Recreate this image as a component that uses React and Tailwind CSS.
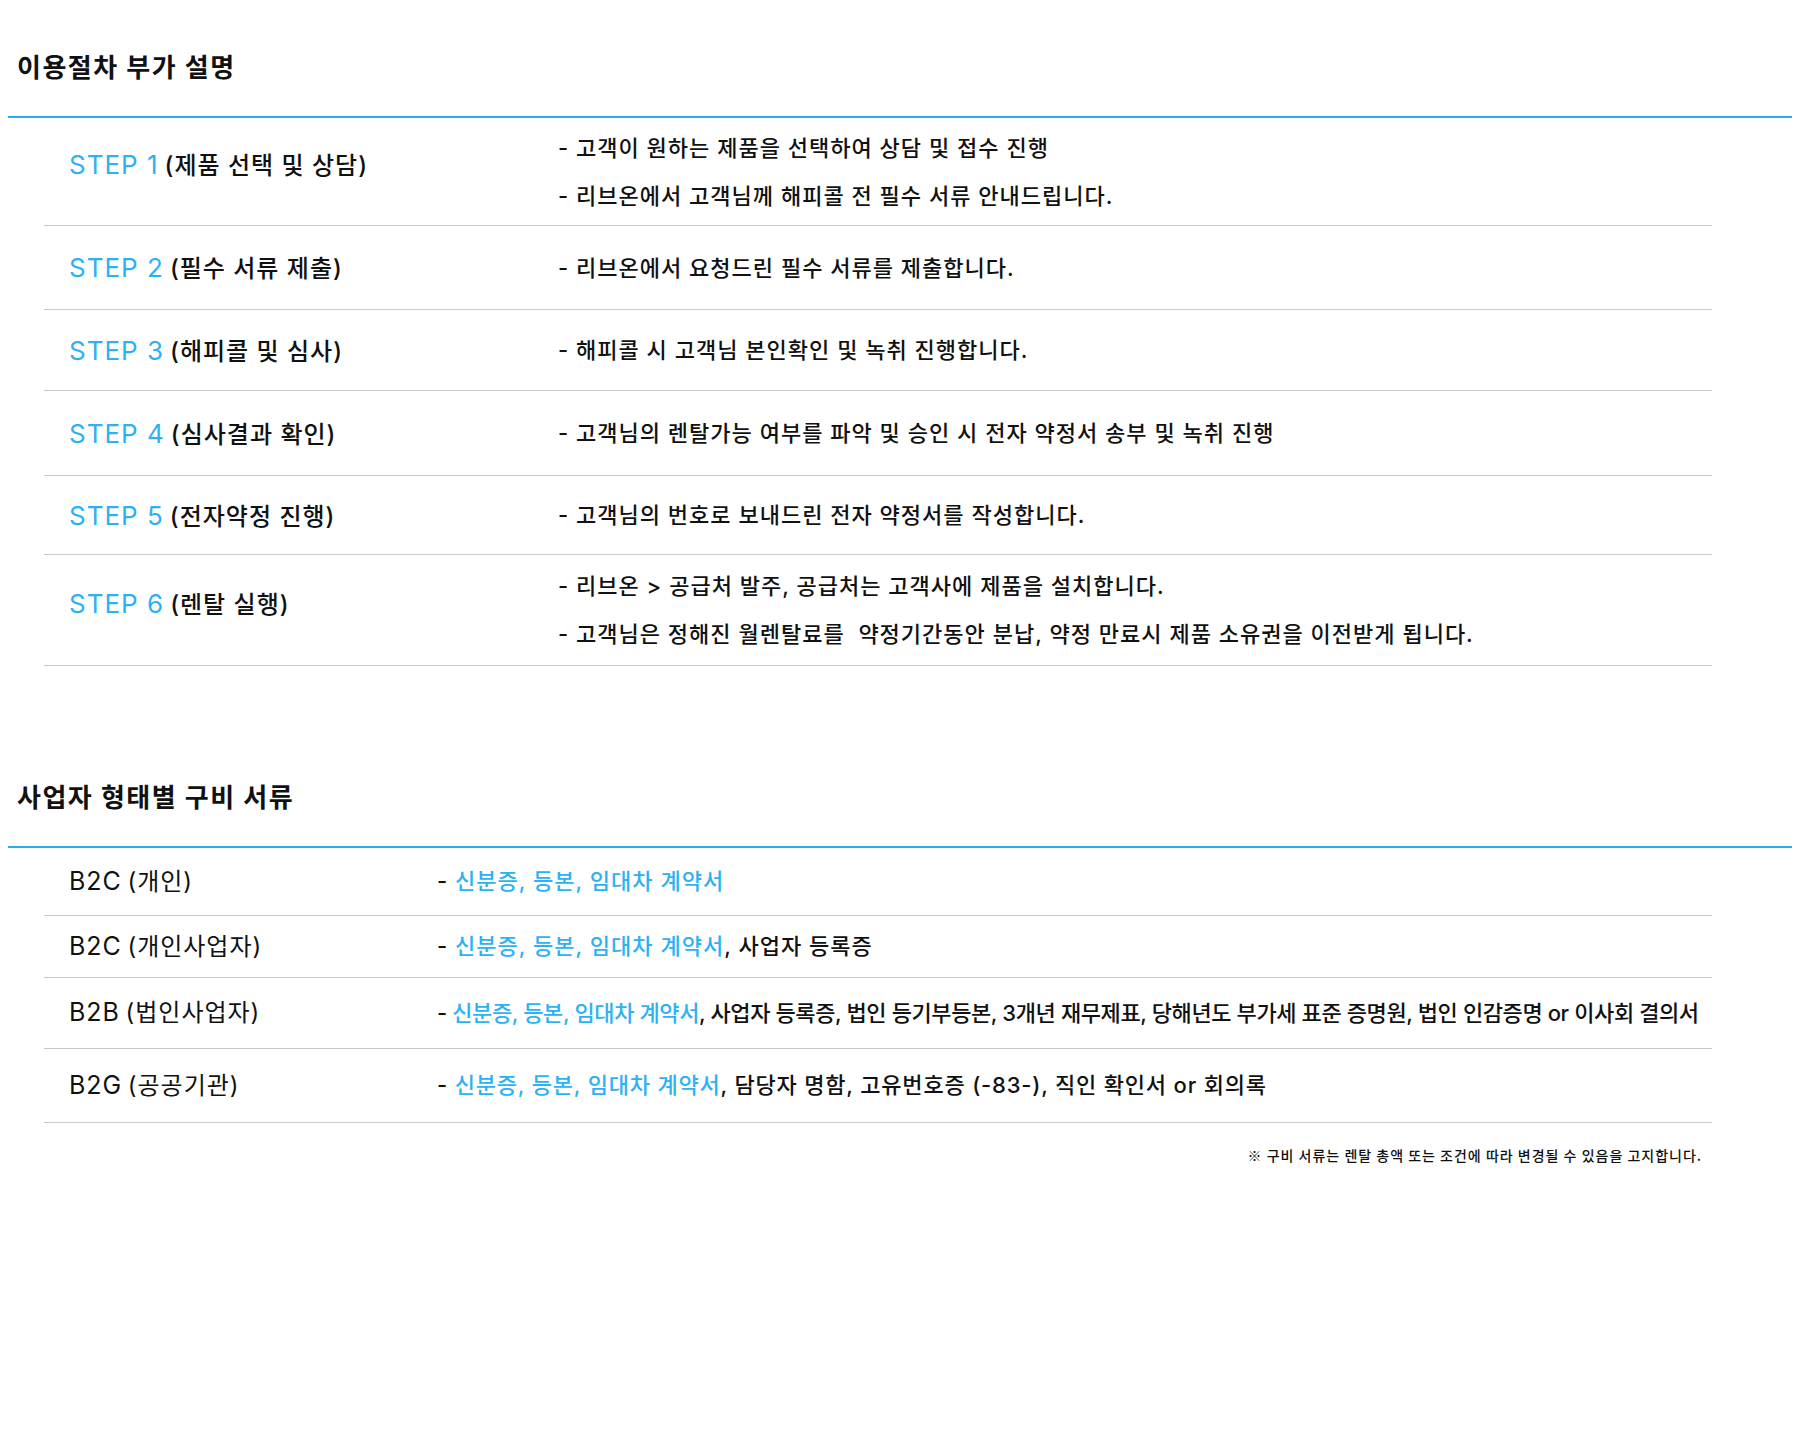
import React from "react";

const FONT = "font-['Inter','Noto_Sans_CJK_KR',sans-serif]";

const steps = [
  {
    no: 1,
    title: "(제품 선택 및 상담)",
    lines: [
      "- 고객이 원하는 제품을 선택하여 상담 및 접수 진행",
      "- 리브온에서 고객님께 해피콜 전 필수 서류 안내드립니다.",
    ],
    h: "h-[108px]",
  },
  {
    no: 2,
    title: "(필수 서류 제출)",
    lines: ["- 리브온에서 요청드린 필수 서류를 제출합니다."],
    h: "h-[84px]",
  },
  {
    no: 3,
    title: "(해피콜 및 심사)",
    lines: ["- 해피콜 시 고객님 본인확인 및 녹취 진행합니다."],
    h: "h-[81px]",
  },
  {
    no: 4,
    title: "(심사결과 확인)",
    lines: ["- 고객님의 렌탈가능 여부를 파악 및 승인 시 전자 약정서 송부 및 녹취 진행"],
    h: "h-[85px]",
  },
  {
    no: 5,
    title: "(전자약정 진행)",
    lines: ["- 고객님의 번호로 보내드린 전자 약정서를 작성합니다."],
    h: "h-[79px]",
  },
  {
    no: 6,
    title: "(렌탈 실행)",
    lines: [
      "- 리브온 > 공급처 발주, 공급처는 고객사에 제품을 설치합니다.",
      "- 고객님은 정해진 월렌탈료를  약정기간동안 분납, 약정 만료시 제품 소유권을 이전받게 됩니다.",
    ],
    h: "h-[111px]",
  },
];

const docs = [
  { type: "B2C", who: "(개인)", rest: "", h: "h-[68px]", track: "tracking-[1px]" },
  { type: "B2C", who: "(개인사업자)", rest: ", 사업자 등록증", h: "h-[62px]", track: "tracking-[1px]" },
  {
    type: "B2B",
    who: "(법인사업자)",
    rest: ", 사업자 등록증, 법인 등기부등본, 3개년 재무제표, 당해년도 부가세 표준 증명원, 법인 인감증명 or 이사회 결의서",
    h: "h-[71px]",
    track: "tracking-[-0.4px]",
  },
  {
    type: "B2G",
    who: "(공공기관)",
    rest: ", 담당자 명함, 고유번호증 (-83-), 직인 확인서 or 회의록",
    h: "h-[74px]",
    track: "tracking-[0.8px]",
  },
];

function SectionTitle({ children }) {
  return (
    <h2 className="pl-[9px] text-[26px] leading-[36px] tracking-[1.5px] font-bold text-[#111]">
      {children}
    </h2>
  );
}

function StepRow({ step }) {
  const twoLines = step.lines.length > 1;
  return (
    <li className={`flex items-center border-b border-[#c8c8c8] ${step.h}`}>
      <div className={`w-[514px] shrink-0 pl-[25px] ${twoLines ? "pb-[14px]" : ""}`}>
        <span className="text-[26px] tracking-[1px] font-normal text-[#2db1f5]">STEP {step.no}</span>
        <span className="ml-[6px] text-[24px] tracking-[1px] font-medium text-[#111]">{step.title}</span>
      </div>
      <div className="flex flex-col">
        {step.lines.map((line) => (
          <p
            key={line}
            className="whitespace-pre text-[22px] leading-[48px] tracking-[1px] font-medium text-[#111]"
          >
            {line}
          </p>
        ))}
      </div>
    </li>
  );
}

function DocRow({ doc }) {
  return (
    <li className={`flex items-center border-b border-[#c8c8c8] ${doc.h}`}>
      <div className="w-[393px] shrink-0 pl-[25px] tracking-[1px] text-[#111]">
        <span className="text-[25px] font-normal">{doc.type}</span>{" "}
        <span className="text-[24px] font-normal">{doc.who}</span>
      </div>
      <p className={`whitespace-nowrap text-[22px] font-medium text-[#111] ${doc.track}`}>
        - <span className="text-[#2db1f5]">신분증, 등본, 임대차 계약서</span>
        {doc.rest}
      </p>
    </li>
  );
}

export default function App() {
  return (
    <div className={`w-[1800px] min-h-[1440px] bg-white px-[8px] ${FONT}`}>
      {/* 이용절차 */}
      <section className="pt-[50px]">
        <SectionTitle>이용절차 부가 설명</SectionTitle>
        <div className="mt-[30px] border-t-2 border-[#2aaaf0]">
          <ul className="ml-[36px] w-[1668px]">
            {steps.map((s) => (
              <StepRow key={s.no} step={s} />
            ))}
          </ul>
        </div>
      </section>

      {/* 구비 서류 */}
      <section className="mt-[114px]">
        <SectionTitle>사업자 형태별 구비 서류</SectionTitle>
        <div className="mt-[30px] border-t-2 border-[#2aaaf0]">
          <ul className="ml-[36px] w-[1668px]">
            {docs.map((d) => (
              <DocRow key={d.who} doc={d} />
            ))}
          </ul>
          <p className="ml-[36px] mt-[22px] w-[1668px] pr-[10px] text-right font-['Noto_Sans_CJK_KR',sans-serif] text-[14px] leading-[20px] tracking-[1px] font-medium text-[#111]">
            ※ 구비 서류는 렌탈 총액 또는 조건에 따라 변경될 수 있음을 고지합니다.
          </p>
        </div>
      </section>
    </div>
  );
}
